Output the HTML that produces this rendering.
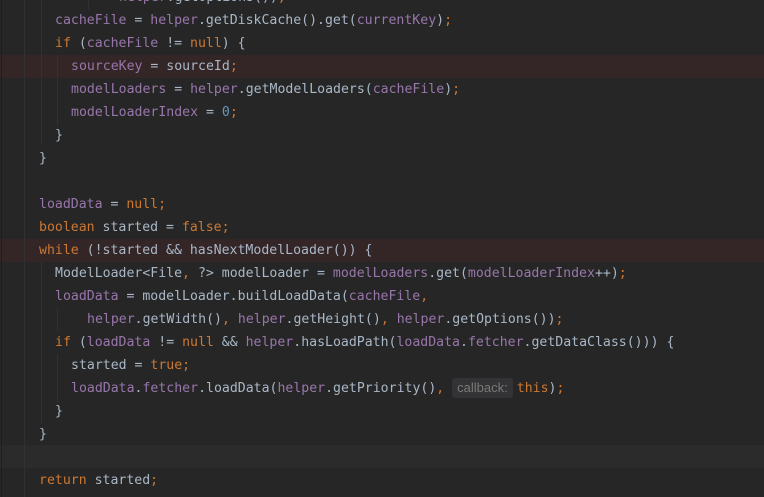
<!DOCTYPE html>
<html><head><meta charset="utf-8"><style>
html,body{margin:0;padding:0;}
body{width:764px;height:497px;background:#262626;position:relative;overflow:hidden;font-family:"DejaVu Sans Mono","Liberation Mono",monospace;font-size:13.2px;color:#a9b7c6;}
.l{position:absolute;left:0;height:23px;line-height:23px;white-space:pre;width:764px;}
.r{background:#342627;}
.c{background:#2b2b2b;}
.k{color:#cc7832}.f{color:#9876aa}.n{color:#6897bb}
.g{position:absolute;width:1px;background:#313131;}
.h{display:inline-block;background:#333335;color:#7a7a7a;font-family:"Liberation Sans",sans-serif;font-size:13px;line-height:20px;height:20px;padding:0 5px;border-radius:3px;margin-right:4px;vertical-align:0px;}
</style></head><body>
<div class="l r" style="top:55px"></div>
<div class="l r" style="top:239px"></div>
<div class="l c" style="top:445px"></div>
<div class="g" style="left:1px;top:0;height:497px;background:#1e1e1e"></div>
<div class="g" style="left:24px;top:0;height:497px"></div>
<div class="g" style="left:41px;top:0;height:145px"></div>
<div class="g" style="left:88px;top:0;height:10px"></div>
<div class="g" style="left:57px;top:55px;height:70px"></div>
<div class="g" style="left:41px;top:262px;height:162px"></div>
<div class="g" style="left:57px;top:354px;height:48px"></div>
<div class="g" style="left:57px;top:308px;height:23px"></div>

<div class="l" style="top:-14px;padding-left:119px"><span class="f">helper</span>.getOptions())<span class="k">;</span></div>
<div class="l" style="top:9px;padding-left:55px"><span class="f">cacheFile</span> = <span class="f">helper</span>.getDiskCache().get(<span class="f">currentKey</span>)<span class="k">;</span></div>
<div class="l" style="top:32px;padding-left:55px"><span class="k">if</span> (<span class="f">cacheFile</span> != <span class="k">null</span>) {</div>
<div class="l" style="top:55px;padding-left:71px"><span class="f">sourceKey</span> = sourceId<span class="k">;</span></div>
<div class="l" style="top:78px;padding-left:71px"><span class="f">modelLoaders</span> = <span class="f">helper</span>.getModelLoaders(<span class="f">cacheFile</span>)<span class="k">;</span></div>
<div class="l" style="top:101px;padding-left:71px"><span class="f">modelLoaderIndex</span> = <span class="n">0</span><span class="k">;</span></div>
<div class="l" style="top:124px;padding-left:55px">}</div>
<div class="l" style="top:147px;padding-left:39px">}</div>
<div class="l" style="top:193px;padding-left:39px"><span class="f">loadData</span> = <span class="k">null;</span></div>
<div class="l" style="top:216px;padding-left:39px"><span class="k">boolean</span> started = <span class="k">false;</span></div>
<div class="l" style="top:239px;padding-left:39px"><span class="k">while</span> (!started &amp;&amp; hasNextModelLoader()) {</div>
<div class="l" style="top:262px;padding-left:55px">ModelLoader&lt;File<span class="k">,</span> ?&gt; modelLoader = <span class="f">modelLoaders</span>.get(<span class="f">modelLoaderIndex</span>++)<span class="k">;</span></div>
<div class="l" style="top:285px;padding-left:55px"><span class="f">loadData</span> = modelLoader.buildLoadData(<span class="f">cacheFile</span><span class="k">,</span></div>
<div class="l" style="top:308px;padding-left:87px"><span class="f">helper</span>.getWidth()<span class="k">,</span> <span class="f">helper</span>.getHeight()<span class="k">,</span> <span class="f">helper</span>.getOptions())<span class="k">;</span></div>
<div class="l" style="top:331px;padding-left:55px"><span class="k">if</span> (<span class="f">loadData</span> != <span class="k">null</span> &amp;&amp; <span class="f">helper</span>.hasLoadPath(<span class="f">loadData</span>.<span class="f">fetcher</span>.getDataClass())) {</div>
<div class="l" style="top:354px;padding-left:71px">started = <span class="k">true;</span></div>
<div class="l" style="top:377px;padding-left:71px"><span class="f">loadData</span>.<span class="f">fetcher</span>.loadData(<span class="f">helper</span>.getPriority()<span class="k">,</span> <span class="h">callback:</span><span class="k">this</span>)<span class="k">;</span></div>
<div class="l" style="top:400px;padding-left:55px">}</div>
<div class="l" style="top:423px;padding-left:39px">}</div>
<div class="l" style="top:469px;padding-left:39px"><span class="k">return</span> started<span class="k">;</span></div>
</body></html>
